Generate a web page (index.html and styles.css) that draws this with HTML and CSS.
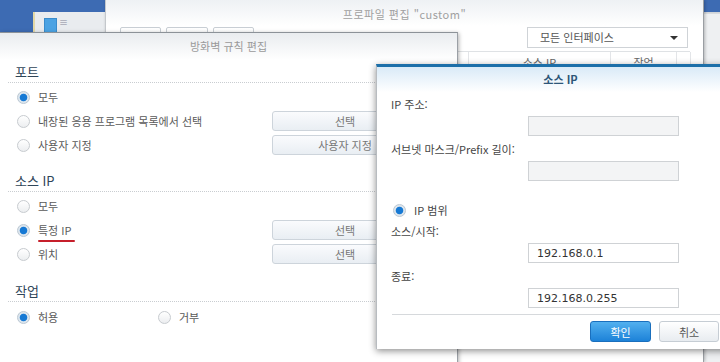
FILE: index.html
```html
<!DOCTYPE html>
<html lang="ko">
<head>
    <meta charset="UTF-8">
    <meta name="viewport" content="width=device-width, initial-scale=1.0">
    <title>방화벽 규칙 편집</title>
    <link rel="stylesheet" href="styles.css">
</head>
<body>
    <div class="desktop">
        <!-- 뒤쪽 창들 -->
        <div class="win win-back">
            <span class="app-icon"></span>
            <span class="app-text">≡</span>
        </div>
        <div class="win win-side"></div>

        <div class="win win-profile">
            <div class="profile-title">프로파일 편집 "custom"</div>
            <div class="profile-toolbar">
                <span class="tool-btn"></span>
                <span class="tool-btn wide"></span>
                <span class="tool-btn"></span>
                <div class="select">
                    모든 인터페이스
                    <span class="caret"></span>
                </div>
            </div>
            <div class="profile-table">
                <span class="th"></span>
                <span class="th">소스 IP</span>
                <span class="th">작업</span>
                <span class="th"></span>
            </div>
        </div>

        <!-- 방화벽 규칙 편집 -->
        <div class="win dlg-fw">
            <div class="dlg-fw-title">방화벽 규칙 편집</div>
            <div class="dlg-fw-body">
                <div class="section">
                    <h3 class="sec-title">포트</h3>
                    <label class="row"><input type="radio" name="port" class="radio" checked> 모두</label>
                    <label class="row"><input type="radio" name="port" class="radio"> 내장된 응용 프로그램 목록에서 선택
                        <button type="button" class="btn">선택</button></label>
                    <label class="row"><input type="radio" name="port" class="radio"> 사용자 지정
                        <button type="button" class="btn">사용자 지정</button></label>
                </div>

                <div class="section">
                    <h3 class="sec-title">소스 IP</h3>
                    <label class="row"><input type="radio" name="src" class="radio"> 모두</label>
                    <label class="row"><input type="radio" name="src" class="radio" checked> <span class="marked">특정 IP</span>
                        <button type="button" class="btn">선택</button></label>
                    <label class="row"><input type="radio" name="src" class="radio"> 위치
                        <button type="button" class="btn">선택</button></label>
                </div>

                <div class="section last">
                    <h3 class="sec-title">작업</h3>
                    <div class="row">
                        <label class="opt"><input type="radio" name="act" class="radio" checked> 허용</label>
                        <label class="opt"><input type="radio" name="act" class="radio"> 거부</label>
                    </div>
                </div>
            </div>
        </div>

        <!-- 소스 IP -->
        <div class="win dlg-ip">
            <div class="dlg-ip-title">소스 IP</div>
            <div class="dlg-ip-body">
                <div class="field-label">IP 주소:</div>
                <input type="text" class="field">
                <div class="field-label">서브넷 마스크/Prefix 길이:</div>
                <input type="text" class="field">

                <label class="range"><input type="radio" class="radio" checked> IP 범위</label>

                <div class="field-label">소스/시작:</div>
                <input type="text" class="field filled" value="192.168.0.1">
                <div class="field-label">종료:</div>
                <input type="text" class="field filled" value="192.168.0.255">
            </div>
            <div class="dlg-ip-foot">
                <button type="button" class="btn-ok">확인</button>
                <button type="button" class="btn-cancel">취소</button>
            </div>
        </div>
    </div>
</body>
</html>
```

FILE: styles.css
```css
* {
    box-sizing: border-box;
    margin: 0;
    padding: 0;
}

body {
    font-family: "Noto Sans CJK KR", "DejaVu Sans", sans-serif;
    font-size: 11px;
    color: #5a5a5a;
    background: #3d6bb3;
}

.desktop {
    position: relative;
    width: 720px;
    height: 362px;
    overflow: hidden;
    background: #3d6bb3;
}

.win {
    position: absolute;
}

/* 뒤쪽 창 */
.win-back {
    left: 33px;
    top: 12px;
    width: 80px;
    height: 30px;
    background: #e9ecef;
    border-left: 2px solid #e3d9a8;
    padding: 6px 0 0 9px;
    display: flex;
    gap: 2px;
}

.app-icon {
    width: 13px;
    height: 16px;
    background: #4ba3e3;
    border: 1px solid #3a8ccc;
}

.app-text {
    font-size: 9px;
    color: #889;
    line-height: 10px;
}

.win-side {
    left: 690px;
    top: 12px;
    width: 40px;
    height: 360px;
    background: #eef0f2;
    border-top: 1px solid #d0d4d8;
    box-shadow: inset 0 13px 0 -12px #d8dbde;
}

.win-profile {
    left: 105px;
    top: 0;
    width: 599px;
    height: 362px;
    background: #fff;
    border-left: 1px solid #c4c8cc;
    border-right: 1px solid #9a9ea3;
    box-shadow: 1px 0 3px rgba(0, 0, 0, 0.25);
}

.profile-title {
    height: 26px;
    line-height: 28px;
    text-align: center;
    color: #a0a0a0;
    font-size: 11px;
    letter-spacing: 0.5px;
    background: linear-gradient(#eef1f4, #fff);
}

.profile-toolbar {
    display: flex;
    gap: 5px;
    padding: 1px 15px 0 14px;
    height: 25px;
}

.tool-btn {
    width: 41px;
    height: 20px;
    border: 1px solid #c8ced4;
    border-radius: 2px;
    background: linear-gradient(#fff, #eef2f5);
}

.tool-btn.wide {
    width: 42px;
}

.select {
    position: relative;
    margin-left: auto;
    width: 161px;
    height: 21px;
    line-height: 19px;
    padding-left: 12px;
    border: 1px solid #cfd3d7;
    color: #555;
    background: #fff;
}

.caret {
    position: absolute;
    right: 9px;
    top: 8px;
    border: 4px solid transparent;
    border-top: 4px solid #333;
    border-bottom: 0;
}

.profile-table {
    display: grid;
    grid-template-columns: 348px 142px 66px 14px;
    margin: 0 13px 0 15px;
    border-top: 1px solid #dfe2e5;
    height: 14px;
}

.th {
    text-align: center;
    color: #666;
    line-height: 20px;
    border-right: 1px solid #e3e5e8;
}

/* 방화벽 규칙 편집 */
.dlg-fw {
    left: 0;
    top: 32px;
    width: 458px;
    height: 340px;
    background: #fff;
    border-top: 1px solid #8c9298;
    border-right: 1px solid #9ba0a6;
    box-shadow: 1px 1px 4px rgba(0, 0, 0, 0.3);
}

.dlg-fw-title {
    height: 27px;
    line-height: 27px;
    text-align: center;
    color: #9a9a9a;
    background: linear-gradient(#e9ecef, #fff);
}

.dlg-fw-body {
    padding-left: 8px;
}

.section + .section {
    margin-top: 12px;
}

.section.last {
    margin-top: 13px;
}

.sec-title {
    font-size: 13px;
    font-weight: normal;
    color: #2f4558;
    line-height: 16px;
    padding: 4px 0 2px 7px;
    border-bottom: 1px dotted #c9cdd1;
    margin-bottom: 2px;
}

.section.last .sec-title {
    margin-bottom: 3px;
}

.row {
    display: flex;
    align-items: center;
    height: 24px;
    padding-left: 9px;
}

.radio {
    appearance: none;
    width: 13px;
    height: 13px;
    margin-right: 8px;
    border: 1px solid #c7cbcf;
    border-radius: 50%;
    background: linear-gradient(#fff, #eceef0);
    flex: none;
}

.radio:checked {
    border-color: #bcc8d3;
    background: radial-gradient(circle, #1679d4 0 3.4px, #dde6ee 4.2px);
}

.btn {
    margin-left: auto;
    margin-right: 39px;
    width: 146px;
    height: 20px;
    font: inherit;
    color: #777;
    border: 1px solid #cdd4db;
    border-radius: 3px;
    background: linear-gradient(#fafbfd, #e9eef3);
}

.marked {
    position: relative;
}

.marked::after {
    content: "";
    position: absolute;
    left: 0;
    right: -3px;
    bottom: -4px;
    height: 2px;
    background: #c61f2b;
    border-radius: 1px;
}

.opt {
    display: flex;
    align-items: center;
    width: 141px;
}

/* 소스 IP */
.dlg-ip {
    left: 376px;
    top: 64px;
    width: 368px;
    height: 285px;
    background: #fff;
    border-top: 3px solid #1c6fa9;
    border-left: 1px solid #b8bcc0;
    box-shadow: 0 2px 7px rgba(0, 0, 0, 0.45);
}

.dlg-ip-title {
    height: 25px;
    line-height: 25px;
    text-align: center;
    font-weight: bold;
    font-size: 11px;
    color: #2d5678;
    background: linear-gradient(#d9eaf7, #fff);
}

.dlg-ip-body {
    padding: 4px 0 0 14px;
}

.field-label {
    line-height: 16px;
    color: #444;
}

.field {
    display: block;
    margin: 4px 0 5px 137px;
    width: 151px;
    height: 20px;
    border: 1px solid #cfd2d5;
    background: #f3f4f5;
    font: 11px "DejaVu Sans", sans-serif;
    color: #333;
    padding-left: 8px;
}

.field.filled {
    background: #fff;
}

.range {
    display: flex;
    align-items: center;
    height: 16px;
    margin: 21px 0 5px 2px;
    color: #444;
}

.dlg-ip-foot {
    display: flex;
    gap: 8px;
    margin: 6px 0 0 15px;
    padding: 6px 0 0 198px;
    border-top: 1px solid #d6d9dc;
}

.btn-ok,
.btn-cancel {
    width: 61px;
    height: 21px;
    font: inherit;
    border-radius: 3px;
}

.btn-ok {
    color: #fff;
    border: 1px solid #1a6fbd;
    background: linear-gradient(#52b0ef, #1d82d8);
}

.btn-cancel {
    width: 60px;
    color: #555;
    border: 1px solid #c6cdd4;
    background: linear-gradient(#fff, #e8ecf0);
}
```
